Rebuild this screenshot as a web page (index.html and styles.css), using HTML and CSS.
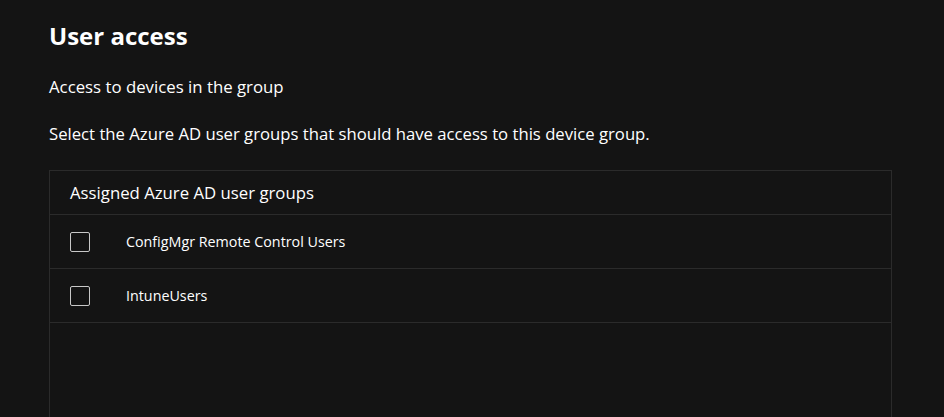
FILE: index.html
```html
<!DOCTYPE html>
<html>
<head>
<meta charset="utf-8">
<link rel="stylesheet" href="styles.css">
</head>
<body>
<main class="page">
  <h1 class="title">User access</h1>
  <p class="subtitle">Access to devices in the group</p>
  <p class="desc">Select the Azure AD user groups that should have access to this device group.</p>
  <section class="table">
    <div class="table-head">Assigned Azure AD user groups</div>
    <div class="row"><span class="check"></span><span class="name">ConfigMgr Remote Control Users</span></div>
    <div class="row"><span class="check"></span><span class="name">IntuneUsers</span></div>
    <div class="filler"></div>
  </section>
</main>
</body>
</html>
```
FILE: styles.css
```css
html, body {
  margin: 0;
  padding: 0;
  background: #141414;
  color: #ffffff;
  font-family: "Open Sans", "Noto Sans", sans-serif;
  overflow: hidden;
}
.page {
  padding: 20px 0 0 49px;
  width: 843px;
}
.title {
  margin: 0;
  font-size: 24px;
  font-weight: 700;
  line-height: 32px;
}
.subtitle {
  margin: 24px 0 0;
  font-size: 16.8px;
  line-height: 22px;
}
.desc {
  margin: 25px 0 0;
  font-size: 16.7px;
  line-height: 22px;
}
.table {
  margin-top: 25px;
  border: 1px solid #2b2b2b;
  border-bottom: none;
}
.table-head {
  height: 43px;
  padding-left: 20px;
  display: flex;
  align-items: center;
  font-size: 16.75px;
  border-bottom: 1px solid #2b2b2b;
}
.row {
  height: 53px;
  display: flex;
  align-items: center;
  padding-left: 20px;
  border-bottom: 1px solid #2b2b2b;
}
.check {
  width: 18px;
  height: 18px;
  border: 1px solid #c8c8c8;
  border-radius: 2px;
  flex: none;
}
.name {
  margin-left: 36px;
  font-size: 14.3px;
}
.filler {
  height: 200px;
}
```
